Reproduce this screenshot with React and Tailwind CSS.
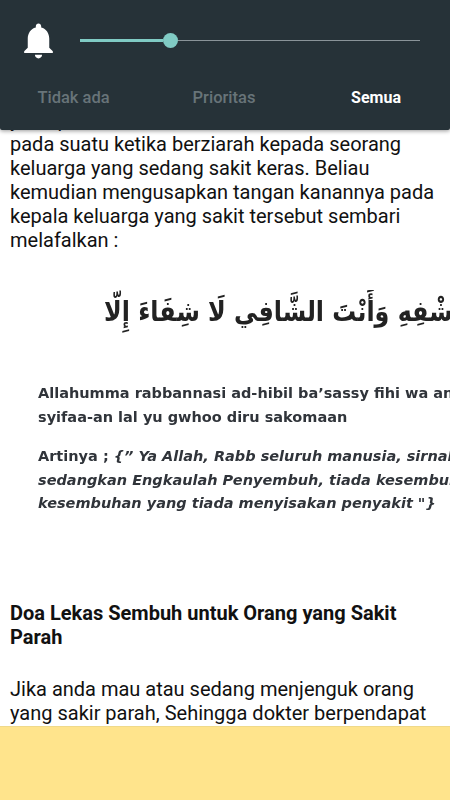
export default function App() {
  return (
    <div className="relative flex h-[800px] w-[450px] flex-col overflow-hidden bg-white font-['Roboto',sans-serif]">
      <header className="relative z-10 h-[130px] shrink-0 rounded-b-[2px] bg-[#263238] shadow-[0_1px_4px_rgba(0,0,0,0.4)]">
        <div className="flex h-[80px] items-center pl-[17px] pr-[30px]">
          <svg viewBox="0 0 24 24" className="h-[43px] w-[43px] shrink-0 fill-white">
            <path d="M12 22c1.1 0 2-.9 2-2h-4c0 1.1.89 2 2 2zm6-6v-5c0-3.07-1.64-5.64-4.5-6.32V4c0-.83-.67-1.5-1.5-1.5s-1.5.67-1.5 1.5v.68C7.63 5.36 6 7.92 6 11v5l-2 2v1h16v-1l-2-2z" />
          </svg>
          <div className="ml-[20px] flex flex-1 items-center">
            <div className="h-[3px] w-[83px] bg-[#80cbc4]" />
            <div className="h-[15px] w-[15px] shrink-0 rounded-full bg-[#80cbc4]" />
            <div className="h-px flex-1 bg-[#8a9499]" />
          </div>
        </div>
        <div className="grid grid-cols-3 text-center text-[16.5px] leading-[20px]">
          <div className="pr-[3px] pt-[8px] font-medium text-[#687479]">Tidak ada</div>
          <div className="pr-[2px] pt-[8px] font-medium text-[#687479]">Prioritas</div>
          <div className="pl-[2px] pt-[8px] text-[16px] font-bold text-white">Semua</div>
        </div>
      </header>

      <main className="min-h-0 flex-1 overflow-hidden px-[10px] text-[20px] leading-[24px] text-[#111]">
        <p className="-mt-[22px]">
          yaitu perbuatan Rasulullah
          <br />
          pada suatu ketika berziarah kepada seorang keluarga yang sedang sakit keras. Beliau kemudian mengusapkan tangan kanannya pada kepala keluarga yang sakit tersebut sembari melafalkan :
        </p>

        <div className="-mx-[10px] mt-[38px] h-[311px] overflow-hidden blur-[0.5px]">
          <div
            dir="rtl"
            className="ml-[104px] w-fit origin-left scale-x-[0.85] whitespace-nowrap font-['DejaVu_Sans',sans-serif] text-[28px] font-bold leading-[44px] text-[#222]"
          >
            اشْفِهِ وَأَنْتَ الشَّافِي لَا شِفَاءَ إِلَّا
          </div>
          <div className="ml-[38px] mt-[48px] w-[440px] font-['DejaVu_Sans',sans-serif] text-[14.5px] font-bold leading-[23.5px] text-[#30343a]">
            <p className="whitespace-nowrap">
              Allahumma rabbannasi ad-hibil ba’sassy fihi wa anta
              <br />
              syifaa-an lal yu gwhoo diru sakomaan
            </p>
            <p className="mt-[16px] whitespace-nowrap">
              Artinya ; <em>{"{"}” Ya Allah, Rabb seluruh manusia, sirnakan</em>
              <br />
              <em>sedangkan Engkaulah Penyembuh, tiada kesembuhan</em>
              <br />
              <em>kesembuhan yang tiada menyisakan penyakit "{"}"}</em>
            </p>
          </div>
        </div>

        <h2 className="font-bold">Doa Lekas Sembuh untuk Orang yang Sakit Parah</h2>
        <p className="mt-[28px]">
          Jika anda mau atau sedang menjenguk orang yang sakir parah, Sehingga dokter berpendapat
        </p>
      </main>

      <footer className="relative z-10 h-[74px] shrink-0 border-t border-[#efd98a] bg-[#ffe48c]" />
    </div>
  );
}
